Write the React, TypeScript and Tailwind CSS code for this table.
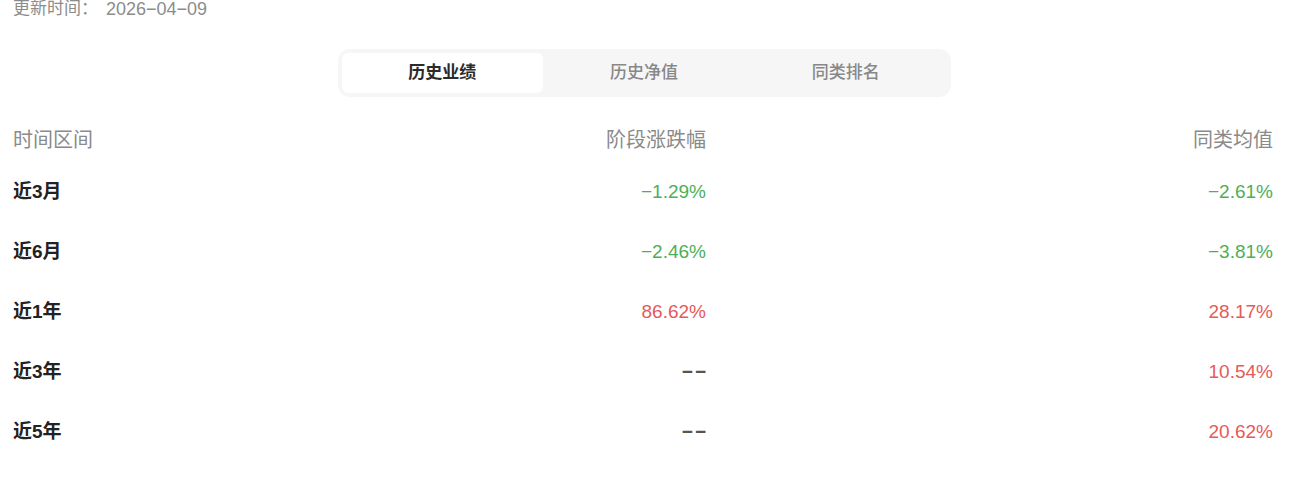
const FONT = "[font-family:'Liberation_Sans','Noto_Sans_CJK_SC',sans-serif]";

type Row = { label: string; stage: string; avg: string };

const rows: Row[] = [
  { label: "近3月", stage: "−1.29%", avg: "−2.61%" },
  { label: "近6月", stage: "−2.46%", avg: "−3.81%" },
  { label: "近1年", stage: "86.62%", avg: "28.17%" },
  { label: "近3年", stage: "−−", avg: "10.54%" },
  { label: "近5年", stage: "−−", avg: "20.62%" },
];

function tone(v: string) {
  if (v === "−−") return "text-[#555555] tracking-[2px] mr-[-2px] font-bold";
  if (v.startsWith("−")) return "text-[#4daf57]";
  return "text-[#e55a5a]";
}

const tabs = ["历史业绩", "历史净值", "同类排名"];

export default function App() {
  const active = 0;
  return (
    <div className={`${FONT} h-[480px] w-[1296px] overflow-hidden bg-white`}>
      <div className="-mt-[1px] flex h-[20px] items-center px-[13px] leading-[20px] text-[#8c8c8c]">
        <span className="w-[93px] text-[17px]">更新时间：</span>
        <span className="text-[18px]">2026−04−09</span>
      </div>

      <div className="mt-[30px] flex justify-center">
        <div className="ml-[-8px] grid h-[48px] w-[613px] grid-cols-3 rounded-[12px] bg-[#f6f6f6] p-[4px]">
          {tabs.map((t, i) => (
            <div
              key={t}
              className={`flex items-center justify-center rounded-[6px] text-[17px] ${
                i === active ? "bg-white font-bold text-[#2b2b2b]" : "font-medium text-[#888888]"
              }`}
            >
              {t}
            </div>
          ))}
        </div>
      </div>

      <div className="mt-[28px] pl-[13px] pr-[23px]">
        <div className="grid h-[30px] grid-cols-[346px_347px_1fr] items-center text-[20px] text-[#8a8a8a]">
          <span>时间区间</span>
          <span className="text-right">阶段涨跌幅</span>
          <span className="text-right">同类均值</span>
        </div>
        <div className="mt-[7px]">
          {rows.map((r) => (
            <div key={r.label} className="grid h-[60px] grid-cols-[346px_347px_1fr] items-center text-[19px] leading-[24px]">
              <span className="font-bold text-[#222222]">{r.label}</span>
              <span className={`text-right ${tone(r.stage)}`}>{r.stage}</span>
              <span className={`text-right ${tone(r.avg)}`}>{r.avg}</span>
            </div>
          ))}
        </div>
      </div>
    </div>
  );
}
